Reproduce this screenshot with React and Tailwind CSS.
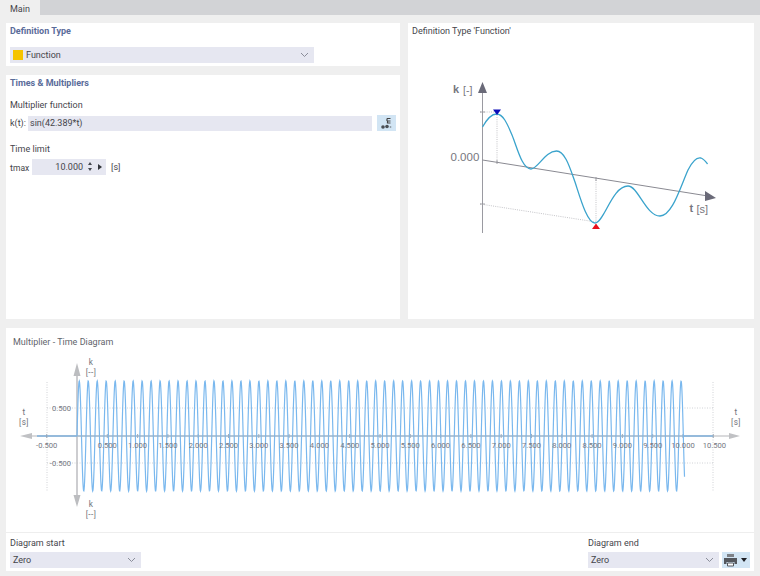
import React from "react";

function Chevron({ className = "" }) {
  return (
    <svg width="9" height="6" viewBox="0 0 9 6" className={className}>
      <path d="M1 1l3.5 3.5L8 1" fill="none" stroke="#8a8d99" strokeWidth="1" />
    </svg>
  );
}

function Select({ children, className = "" }) {
  return (
    <div className={`h-4 bg-[#e6e7f1] flex items-center justify-between pl-[3px] pr-[5px] ${className}`}>
      <div className="flex items-center">{children}</div>
      <Chevron />
    </div>
  );
}

function FunctionDiagram() {
  return (
    <svg width="346" height="200" viewBox="0 0 346 200" className="block">
      <g transform="translate(-408 -70)" fontFamily="'Liberation Sans', sans-serif" fill="#77777e">
        <path d="M482.5 92V233" stroke="#9a9aa1" strokeWidth="1" />
        <path d="M482.5 160L708 196" stroke="#8a8a92" strokeWidth="1" />
        <path d="M478 93L482.5 82L487 93Z" fill="#6a6a78" />
        <path d="M705 191L716 198L705 201Z" fill="#6a6a78" />
        <path d="M480 112H497V162M480 204L596 222V179" fill="none" stroke="#b5b5ba" strokeWidth="0.8" strokeDasharray="1 1.2" />
        <path d="M480 112h5M480 204h5M497 160v4M596 177v4" stroke="#8a8a92" strokeWidth="0.8" />
        <path
          d="M482.5 127C487 119 491 114 496.5 114C503 114 507 123 512 135C517 147 522 169 531 169C538 169 545 151 556.5 151C565 151 570 168 575 182C580 197 587 223 595 223C604 223 612 186 628 186C638 186 646 216 660 216C672 216 680 188 688 170C693 160 697 157 701 158C704 159 706 162 707.5 164"
          fill="none"
          stroke="#3aa3cc"
          strokeWidth="1.3"
        />
        <path d="M493 109.5H501L497 115Z" fill="#0b0bb8" />
        <path d="M592 229H600L596 223.5Z" fill="#e8101c" />
        <text x="453" y="93" fontSize="11" fontWeight="700">k</text>
        <text x="463" y="94" fontSize="10.5">[-]</text>
        <text x="450.5" y="161" fontSize="11.5">0.000</text>
        <text x="689.5" y="212" fontSize="11" fontWeight="700">t</text>
        <text x="696.5" y="213" fontSize="11">[s]</text>
      </g>
    </svg>
  );
}

function buildSine() {
  const pts = [];
  for (let i = 0; i <= 2400; i++) {
    const t = (i / 2400) * 10.025;
    pts.push(`${(71 + t * 60.6).toFixed(2)},${(80 - 55 * Math.sin(42.389 * t)).toFixed(2)}`);
  }
  return "M" + pts.join("L");
}

const ticks = [-0.5, 0.5, 1, 1.5, 2, 2.5, 3, 3.5, 4, 4.5, 5, 5.5, 6, 6.5, 7, 7.5, 8, 8.5, 9, 9.5, 10, 10.5];

function TimeDiagram() {
  const textProps = { fontSize: 7.6, fontFamily: "'Roboto', sans-serif", fill: "#74777f", textAnchor: "middle" };
  const axisText = { fontSize: 8.2, fontFamily: "'Roboto', sans-serif", fill: "#6f7279", textAnchor: "middle", letterSpacing: 0.4 };
  return (
    <svg width="748" height="166" viewBox="0 0 748 166" className="block">
      <path d="M41 52H708M41 107H708M41 26V136M707 26V136" stroke="#c4c6cb" strokeWidth="0.8" strokeDasharray="1 1.5" fill="none" />
      <path d="M26 80H726" stroke="#b4b5b9" strokeWidth="1" />
      <path d="M71 20V140" stroke="#bcbdc0" strokeWidth="1.5" />
      <path d="M67.5 20L71 7L74.5 20ZM67.5 139L71 151L74.5 139Z" fill="#bcbdc0" />
      <path d="M14 80L26 77V83ZM734 80L723 77V83Z" fill="#c0c1c4" />
      <path d="M31 80H71M677 80H707" stroke="#7fb0da" strokeWidth="1.6" />
      {ticks.map((t) => (
        <path key={t} d={`M${71 + t * 60.6} 78V82`} stroke="#9aa5b2" strokeWidth="0.9" />
      ))}
      <path d={buildSine()} fill="none" stroke="#7ab8ee" strokeWidth="1.2" />
      <path d="M71 80H677" stroke="#8fb2d0" strokeWidth="1.1" />
      {ticks.map((t) => (
        <text key={t} x={71 + t * 60.6 + (t === 10.5 ? 1 : 0)} y={92} {...textProps}>
          {t.toFixed(3)}
        </text>
      ))}
      <text x="65" y="55" {...textProps} textAnchor="end">0.500</text>
      <text x="65" y="110" {...textProps} textAnchor="end">-0.500</text>
      <text x="85" y="9" {...axisText}>k</text>
      <text x="85" y="19" {...axisText}>[--]</text>
      <text x="85" y="151" {...axisText}>k</text>
      <text x="85" y="161" {...axisText}>[--]</text>
      <text x="18" y="59" {...axisText}>t</text>
      <text x="18" y="69" {...axisText}>[s]</text>
      <text x="730" y="59" {...axisText}>t</text>
      <text x="730" y="69" {...axisText}>[s]</text>
    </svg>
  );
}

export default function App() {
  return (
    <div className="w-[760px] h-[576px] bg-[#efefef] overflow-hidden font-['Roboto',sans-serif] text-[9px] leading-[12px] text-[#45454b]">
      <div className="h-[15px] flex bg-[#d2d3d6]">
        <div className="w-10 bg-[#efefef] pl-[10px] pt-[3px]">Main</div>
      </div>
      <div className="flex gap-2 px-[6px] pt-2">
        <div className="w-[394px] flex flex-col gap-[9px]">
          <section className="h-[43px] bg-white pl-1 pt-[2px]">
            <h2 className="font-bold text-[#5a6c9a] h-[22px]">Definition Type</h2>
            <Select className="w-[304px]">
              <span className="w-[10px] h-[10px] bg-[#f5c400] mr-[3px]" />
              <span>Function</span>
            </Select>
          </section>
          <section className="h-[244px] bg-white pl-1 pt-[2px]">
            <h2 className="font-bold text-[#5a6c9a] h-[21px]">Times &amp; Multipliers</h2>
            <div className="h-[17px] pt-[1px]">Multiplier function</div>
            <div className="flex items-center h-4">
              <span className="w-[18px]">k(t):</span>
              <div className="w-[344px] h-[15px] bg-[#e6e7f1] pl-[2px] flex items-center">sin(42.389*t)</div>
              <button className="ml-[5px] w-[19px] h-4 bg-[#d2e5f4] flex items-center justify-center">
                <svg width="15" height="14" viewBox="0 0 15 14">
                  <path d="M8 2.5h3.5M8 2.5v2.5M11.5 5H8.5v2h3" fill="none" stroke="#444" strokeWidth="1.2" />
                  <circle cx="4" cy="11" r="1.8" fill="#4a4f55" />
                  <circle cx="8" cy="10.5" r="1.8" fill="#4a4f55" />
                  <circle cx="11.5" cy="11" r="0.9" fill="#8f9aa4" />
                </svg>
              </button>
            </div>
            <div className="mt-[12px] h-[14px]">Time limit</div>
            <div className="flex items-center h-[17px] mt-[1px]">
              <span className="w-[22px] pt-[2px]">t<span className="text-[8.5px]">max</span></span>
              <div className="w-[52px] h-[16px] bg-[#e6e7f1] flex items-center justify-end pr-[1px]">10.000</div>
              <div className="w-[10px] h-[16px] bg-[#e6e7f1] flex flex-col items-center justify-center gap-[3px] pl-[1px]">
                <span className="w-0 h-0 border-x-[2px] border-x-transparent border-b-[3px] border-b-[#44474e]" />
                <span className="w-0 h-0 border-x-[2px] border-x-transparent border-t-[3px] border-t-[#44474e]" />
              </div>
              <div className="w-[12px] h-[16px] bg-[#e6e7f1] flex items-center justify-center">
                <span className="w-0 h-0 border-y-[3px] border-y-transparent border-l-[4px] border-l-[#33363c]" />
              </div>
              <span className="ml-[5px]">[s]</span>
            </div>
          </section>
        </div>
        <section className="w-[346px] h-[296px] bg-white">
          <div className="pl-1 pt-[2px] h-[47px]">Definition Type 'Function'</div>
          <FunctionDiagram />
        </section>
      </div>
      <section className="mx-[6px] mt-[9px] w-[748px] h-[243px] bg-white">
        <div className="h-[28px] pl-[7px] pt-2 text-[#62656c]">Multiplier - Time Diagram</div>
        <TimeDiagram />
        <div className="h-[38px] mt-[10px] border-t border-[#eeeeee] flex justify-between pl-1 pr-1 pt-[4px]">
          <div className="w-[131px]">
            <div className="h-[15px]">Diagram start</div>
            <Select className="pl-[2px]">Zero</Select>
          </div>
          <div className="flex flex-col">
            <div className="h-[15px]">Diagram end</div>
            <div className="flex gap-[3px]">
              <Select className="w-[131px] pl-[2px]">Zero</Select>
              <button className="w-[28px] h-4 bg-[#d2e5f4] flex items-center pl-[1px] gap-[3px]">
                <svg width="15" height="14" viewBox="0 0 15 14">
                  <path d="M4 1h7v3H4z" fill="#7d8187" />
                  <path d="M1 5h13v6h-2.5V9h-8v2H1z" fill="#54585e" />
                  <path d="M4.5 10h6v3h-6z" fill="#fff" stroke="#54585e" strokeWidth="1" />
                </svg>
                <span className="w-0 h-0 border-x-[3px] border-x-transparent border-t-[4px] border-t-[#1d1f24]" />
              </button>
            </div>
          </div>
        </div>
      </section>
    </div>
  );
}
